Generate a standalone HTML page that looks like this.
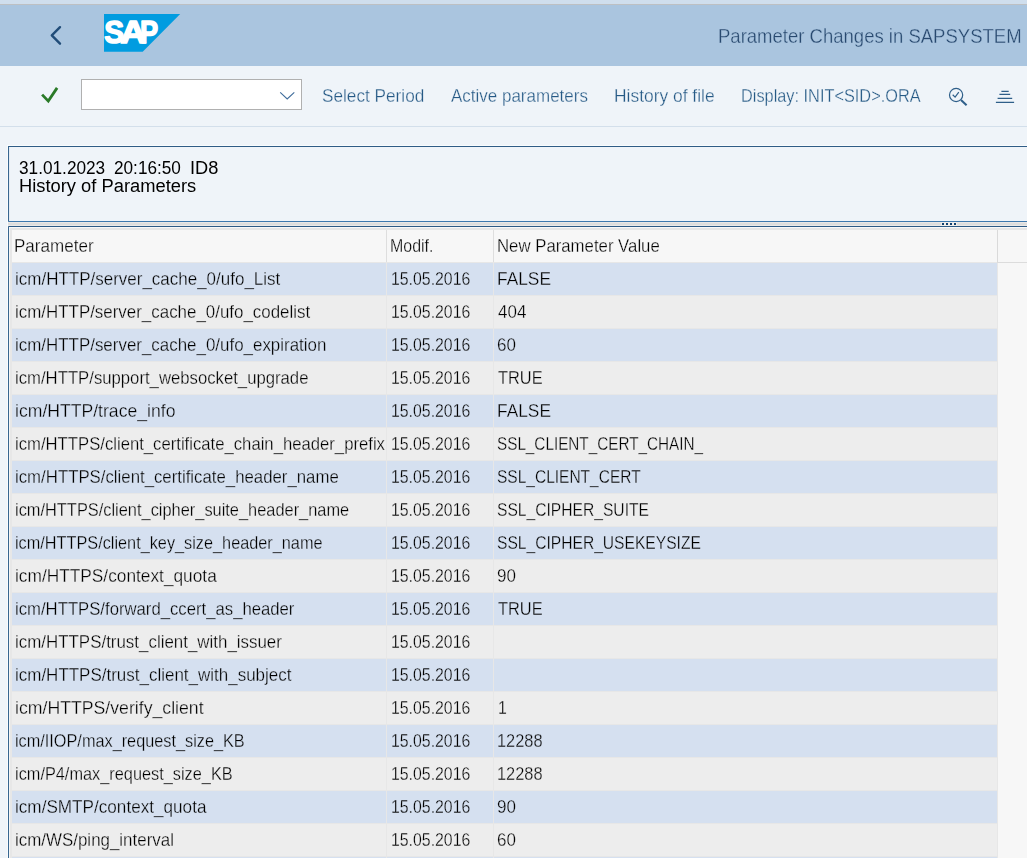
<!DOCTYPE html>
<html lang="en">
<head>
<meta charset="utf-8">
<title>Parameter Changes in SAPSYSTEM</title>
<style>
html,body{margin:0;padding:0}
body{width:1027px;height:858px;overflow:hidden;background:#eff4f9;font-family:"Liberation Sans", "Noto Sans CJK JP", sans-serif;}
#app{position:relative;width:1027px;height:858px;overflow:hidden;background:#eff4f9}
#app div,#app span,#app svg{position:absolute}
#txt{left:0;top:0;width:1027px;height:858px;will-change:transform}
.t{white-space:pre;line-height:1;transform-origin:0 0;}
#strip{left:0;top:0;width:1027px;height:4px;background:#cfdeed}
#stripline{left:0;top:4px;width:1027px;height:1px;background:#bdc0c3}
#hdr{left:0;top:5px;width:1027px;height:61px;background:#aac5df}
#tbline{left:0;top:126px;width:1027px;height:1px;background:#d3dfeb}
#cmd{left:81px;top:79px;width:219px;height:29px;background:#fff;border:1px solid #b0b0b0}
#box1{left:8px;top:146px;width:1030px;height:74px;border:1px solid #376690;border-top-color:#2f5c86;border-bottom-color:#3d78ae;border-radius:0 0 0 1px;box-shadow:inset 1px 0 0 #e4ebf3}
#gap{left:8px;top:222px;width:1019px;height:4px;background:linear-gradient(#e9e7e5 0 1px,#dddddd 1px 3px,#ebe9e7 3px 4px)}
#hl{left:7px;top:145px;width:1px;height:713px;background:#f8fbfe}
#hl2{left:7px;top:145px;width:1020px;height:1px;background:#f9fcfe}
#box2{left:8px;top:226px;width:1030px;height:700px;border:1px solid #2d5a85;border-left-color:#376690;border-radius:1px 0 0 0;background:#f7f7f7}
#lstrip{left:9px;top:227px;width:3px;height:640px;background:linear-gradient(90deg,#f4f4f4 0 1px,#e7e7e7 1px 3px)}
#tstrip{left:10px;top:227px;width:1017px;height:3px;background:linear-gradient(#f8f8f8 0 1px,#e6e6e6 1px 3px)}
#thead{left:12px;top:230px;width:985px;height:32px;background:#f7f7f7}
#vline{left:997px;top:230px;width:1px;height:32px;background:#dadada}
#vline2{left:997px;top:262px;width:1px;height:600px;background:#e7e7e7}
#hline{left:997px;top:262px;width:30px;height:1px;background:#dcdcdc}
.r{left:12px;width:985px;height:32px;border-top:1px solid #e7e7e7}
.rb{background:#d5e0f0}
.rg{background:#ededed}
.s{width:1px;height:32px;top:0;background:#e7e7e7}
.hs{width:1px;height:32px;top:230px;background:#dedede}
.dot{width:2px;height:2px;top:223px;background:#10406f}
#halo{left:941px;top:222px;width:16px;height:4px;background:#f0edea}

</style>
</head>
<body>
<div id="app">
<div id="strip"></div><div id="stripline"></div><div id="hdr"></div>
<svg style="left:44px;top:20px" width="24" height="32" viewBox="44 20 24 32"><path d="M60 27.2 L51.8 35.3 L60 43.7" fill="none" stroke="#214d79" stroke-width="2.4" stroke-linecap="round" stroke-linejoin="round"/></svg>
<svg style="left:100px;top:10px" width="90" height="46" viewBox="100 10 90 46" role="img" aria-label="SAP"><title>SAP</title><path d="M104 14 H180.2 L142.7 51.7 H104 Z" fill="#019ce0"/><text font-family="Liberation Sans, sans-serif" font-weight="bold" font-size="31" fill="#fff" stroke="#fff" stroke-width="1.5" stroke-linejoin="round" y="43.1"><tspan x="104.2" textLength="19.9" lengthAdjust="spacingAndGlyphs">S</tspan><tspan x="120.2" textLength="25.8" lengthAdjust="spacingAndGlyphs">A</tspan><tspan x="140.1" textLength="18.1" lengthAdjust="spacingAndGlyphs">P</tspan></text></svg>
<div id="tbline"></div>
<svg style="left:36px;top:82px" width="28" height="26" viewBox="36 82 28 26"><path d="M42.1 94.6 L48.3 101.1 L57.1 87.9" fill="none" stroke="#2a7a28" stroke-width="2.8" stroke-linecap="butt" stroke-linejoin="miter"/></svg>
<div id="cmd"></div>
<svg style="left:276px;top:88px" width="24" height="16" viewBox="276 88 24 16"><path d="M280.2 92.3 L287.2 98.9 L294.3 92.3" fill="none" stroke="#3f6c9b" stroke-width="1.1"/></svg>
<svg style="left:944px;top:84px" width="28" height="26" viewBox="944 84 28 26"><circle cx="956.1" cy="95" r="6.6" fill="none" stroke="#2f5f8a" stroke-width="1.2"/><path d="M961 100 L966.6 105.3" stroke="#2f5f8a" stroke-width="2" stroke-linecap="butt" fill="none"/><path d="M952.7 94.8 L955.1 97.1 L958.8 92.2" stroke="#2f5f8a" stroke-width="1.2" fill="none"/></svg>
<svg style="left:992px;top:88px" width="26" height="18" viewBox="992 88 26 18"><path d="M1001.4 91.4 H1008.7 M999.4 94.4 H1010.2 M997.6 98.4 H1012.2 M995.9 102.3 H1014.1" stroke="#2f5f8a" stroke-width="1.15" fill="none"/></svg>
<div id="box1"></div><div id="gap"></div><div id="hl"></div><div id="hl2"></div>
<div id="halo"></div>
<div class="dot" style="left:942px"></div>
<div class="dot" style="left:946px"></div>
<div class="dot" style="left:950px"></div>
<div class="dot" style="left:954px"></div>
<div id="box2"></div><div id="lstrip"></div><div id="tstrip"></div><div id="thead"></div>
<div class="hs" style="left:386px"></div><div class="hs" style="left:493px"></div>
<div id="vline"></div><div id="vline2"></div><div id="hline"></div>
<div class="r rb" style="top:262px"><div class="s" style="left:374px"></div><div class="s" style="left:481px"></div></div>
<div class="r rg" style="top:295px"><div class="s" style="left:374px"></div><div class="s" style="left:481px"></div></div>
<div class="r rb" style="top:328px"><div class="s" style="left:374px"></div><div class="s" style="left:481px"></div></div>
<div class="r rg" style="top:361px"><div class="s" style="left:374px"></div><div class="s" style="left:481px"></div></div>
<div class="r rb" style="top:394px"><div class="s" style="left:374px"></div><div class="s" style="left:481px"></div></div>
<div class="r rg" style="top:427px"><div class="s" style="left:374px"></div><div class="s" style="left:481px"></div></div>
<div class="r rb" style="top:460px"><div class="s" style="left:374px"></div><div class="s" style="left:481px"></div></div>
<div class="r rg" style="top:493px"><div class="s" style="left:374px"></div><div class="s" style="left:481px"></div></div>
<div class="r rb" style="top:526px"><div class="s" style="left:374px"></div><div class="s" style="left:481px"></div></div>
<div class="r rg" style="top:559px"><div class="s" style="left:374px"></div><div class="s" style="left:481px"></div></div>
<div class="r rb" style="top:592px"><div class="s" style="left:374px"></div><div class="s" style="left:481px"></div></div>
<div class="r rg" style="top:625px"><div class="s" style="left:374px"></div><div class="s" style="left:481px"></div></div>
<div class="r rb" style="top:658px"><div class="s" style="left:374px"></div><div class="s" style="left:481px"></div></div>
<div class="r rg" style="top:691px"><div class="s" style="left:374px"></div><div class="s" style="left:481px"></div></div>
<div class="r rb" style="top:724px"><div class="s" style="left:374px"></div><div class="s" style="left:481px"></div></div>
<div class="r rg" style="top:757px"><div class="s" style="left:374px"></div><div class="s" style="left:481px"></div></div>
<div class="r rb" style="top:790px"><div class="s" style="left:374px"></div><div class="s" style="left:481px"></div></div>
<div class="r rg" style="top:823px"><div class="s" style="left:374px"></div><div class="s" style="left:481px"></div></div>
<div class="r rb" style="top:856px"><div class="s" style="left:374px"></div><div class="s" style="left:481px"></div></div>
<div id="txt">
<span class="t" style="left:717.74px;top:25.32px;font-size:21px;color:#28496f;-webkit-text-stroke:0.35px #aac5df;transform:scaleX(0.8818)">Parameter Changes in SAPSYSTEM</span>
<span class="t" style="left:321.67px;top:87.44px;font-size:18.5px;color:#255985;-webkit-text-stroke:0.3px #eff4f9;transform:scaleX(0.9296)">Select Period</span>
<span class="t" style="left:451.20px;top:87.44px;font-size:18.5px;color:#255985;-webkit-text-stroke:0.3px #eff4f9;transform:scaleX(0.9182)">Active parameters</span>
<span class="t" style="left:614.46px;top:87.44px;font-size:18.5px;color:#255985;-webkit-text-stroke:0.3px #eff4f9;transform:scaleX(0.9410)">History of file</span>
<span class="t" style="left:741.32px;top:87.44px;font-size:18.5px;color:#255985;-webkit-text-stroke:0.3px #eff4f9;transform:scaleX(0.8822)">Display: INIT&lt;SID&gt;.ORA</span>
<span class="t" style="left:18.64px;top:158.96px;font-size:18px;color:#000;transform:scaleX(0.9568)">31.01.2023</span>
<span class="t" style="left:114.45px;top:158.96px;font-size:18px;color:#000;transform:scaleX(0.9544)">20:16:50</span>
<span class="t" style="left:190.48px;top:158.96px;font-size:18px;color:#000;transform:scaleX(1.0120)">ID8</span>
<span class="t" style="left:18.58px;top:176.96px;font-size:18px;color:#000;transform:scaleX(1.0180)">History of Parameters</span>
<span class="t" style="left:14.28px;top:237.34px;font-size:18.5px;color:#000;-webkit-text-stroke:0.3px #f7f7f7;transform:scaleX(0.9212)">Parameter</span>
<span class="t" style="left:389.94px;top:237.34px;font-size:18.5px;color:#000;-webkit-text-stroke:0.3px #f7f7f7;transform:scaleX(0.8625)">Modif.</span>
<span class="t" style="left:496.79px;top:237.34px;font-size:18.5px;color:#000;-webkit-text-stroke:0.3px #f7f7f7;transform:scaleX(0.9062)">New Parameter Value</span>
<span class="t" style="left:15.08px;top:270.34px;font-size:18.5px;color:#000;-webkit-text-stroke:0.3px #d5e0f0;transform:scaleX(0.9181)">icm/HTTP/server_cache_0/ufo_List</span>
<span class="t" style="left:390.54px;top:270.34px;font-size:18.5px;color:#000;-webkit-text-stroke:0.3px #d5e0f0;transform:scaleX(0.8560)">15.05.2016</span>
<span class="t" style="left:496.76px;top:270.34px;font-size:18.5px;color:#000;-webkit-text-stroke:0.3px #d5e0f0;transform:scaleX(0.9375)">FALSE</span>
<span class="t" style="left:15.09px;top:303.34px;font-size:18.5px;color:#000;-webkit-text-stroke:0.3px #ededed;transform:scaleX(0.9143)">icm/HTTP/server_cache_0/ufo_codelist</span>
<span class="t" style="left:390.54px;top:303.34px;font-size:18.5px;color:#000;-webkit-text-stroke:0.3px #ededed;transform:scaleX(0.8560)">15.05.2016</span>
<span class="t" style="left:497.70px;top:303.34px;font-size:18.5px;color:#000;-webkit-text-stroke:0.3px #ededed;transform:scaleX(0.9200)">404</span>
<span class="t" style="left:15.09px;top:336.34px;font-size:18.5px;color:#000;-webkit-text-stroke:0.3px #d5e0f0;transform:scaleX(0.9148)">icm/HTTP/server_cache_0/ufo_expiration</span>
<span class="t" style="left:390.54px;top:336.34px;font-size:18.5px;color:#000;-webkit-text-stroke:0.3px #d5e0f0;transform:scaleX(0.8560)">15.05.2016</span>
<span class="t" style="left:496.78px;top:336.34px;font-size:18.5px;color:#000;-webkit-text-stroke:0.3px #d5e0f0;transform:scaleX(0.9211)">60</span>
<span class="t" style="left:15.10px;top:369.34px;font-size:18.5px;color:#000;-webkit-text-stroke:0.3px #ededed;transform:scaleX(0.9031)">icm/HTTP/support_websocket_upgrade</span>
<span class="t" style="left:390.54px;top:369.34px;font-size:18.5px;color:#000;-webkit-text-stroke:0.3px #ededed;transform:scaleX(0.8560)">15.05.2016</span>
<span class="t" style="left:497.70px;top:369.34px;font-size:18.5px;color:#000;-webkit-text-stroke:0.3px #ededed;transform:scaleX(0.8860)">TRUE</span>
<span class="t" style="left:15.05px;top:402.34px;font-size:18.5px;color:#000;-webkit-text-stroke:0.3px #d5e0f0;transform:scaleX(0.9515)">icm/HTTP/trace_info</span>
<span class="t" style="left:390.54px;top:402.34px;font-size:18.5px;color:#000;-webkit-text-stroke:0.3px #d5e0f0;transform:scaleX(0.8560)">15.05.2016</span>
<span class="t" style="left:496.76px;top:402.34px;font-size:18.5px;color:#000;-webkit-text-stroke:0.3px #d5e0f0;transform:scaleX(0.9375)">FALSE</span>
<span class="t" style="left:15.10px;top:435.34px;font-size:18.5px;color:#000;-webkit-text-stroke:0.3px #ededed;transform:scaleX(0.9017)">icm/HTTPS/client_certificate_chain_header_prefix</span>
<span class="t" style="left:390.54px;top:435.34px;font-size:18.5px;color:#000;-webkit-text-stroke:0.3px #ededed;transform:scaleX(0.8560)">15.05.2016</span>
<span class="t" style="left:496.87px;top:435.34px;font-size:18.5px;color:#000;-webkit-text-stroke:0.3px #ededed;transform:scaleX(0.8257)">SSL_CLIENT_CERT_CHAIN_</span>
<span class="t" style="left:15.09px;top:468.34px;font-size:18.5px;color:#000;-webkit-text-stroke:0.3px #d5e0f0;transform:scaleX(0.9073)">icm/HTTPS/client_certificate_header_name</span>
<span class="t" style="left:390.54px;top:468.34px;font-size:18.5px;color:#000;-webkit-text-stroke:0.3px #d5e0f0;transform:scaleX(0.8560)">15.05.2016</span>
<span class="t" style="left:496.86px;top:468.34px;font-size:18.5px;color:#000;-webkit-text-stroke:0.3px #d5e0f0;transform:scaleX(0.8382)">SSL_CLIENT_CERT</span>
<span class="t" style="left:15.11px;top:501.34px;font-size:18.5px;color:#000;-webkit-text-stroke:0.3px #ededed;transform:scaleX(0.8856)">icm/HTTPS/client_cipher_suite_header_name</span>
<span class="t" style="left:390.54px;top:501.34px;font-size:18.5px;color:#000;-webkit-text-stroke:0.3px #ededed;transform:scaleX(0.8560)">15.05.2016</span>
<span class="t" style="left:496.86px;top:501.34px;font-size:18.5px;color:#000;-webkit-text-stroke:0.3px #ededed;transform:scaleX(0.8444)">SSL_CIPHER_SUITE</span>
<span class="t" style="left:15.12px;top:534.34px;font-size:18.5px;color:#000;-webkit-text-stroke:0.3px #d5e0f0;transform:scaleX(0.8796)">icm/HTTPS/client_key_size_header_name</span>
<span class="t" style="left:390.54px;top:534.34px;font-size:18.5px;color:#000;-webkit-text-stroke:0.3px #d5e0f0;transform:scaleX(0.8560)">15.05.2016</span>
<span class="t" style="left:496.86px;top:534.34px;font-size:18.5px;color:#000;-webkit-text-stroke:0.3px #d5e0f0;transform:scaleX(0.8438)">SSL_CIPHER_USEKEYSIZE</span>
<span class="t" style="left:15.07px;top:567.34px;font-size:18.5px;color:#000;-webkit-text-stroke:0.3px #ededed;transform:scaleX(0.9344)">icm/HTTPS/context_quota</span>
<span class="t" style="left:390.54px;top:567.34px;font-size:18.5px;color:#000;-webkit-text-stroke:0.3px #ededed;transform:scaleX(0.8560)">15.05.2016</span>
<span class="t" style="left:496.78px;top:567.34px;font-size:18.5px;color:#000;-webkit-text-stroke:0.3px #ededed;transform:scaleX(0.9211)">90</span>
<span class="t" style="left:15.10px;top:600.34px;font-size:18.5px;color:#000;-webkit-text-stroke:0.3px #d5e0f0;transform:scaleX(0.9029)">icm/HTTPS/forward_ccert_as_header</span>
<span class="t" style="left:390.54px;top:600.34px;font-size:18.5px;color:#000;-webkit-text-stroke:0.3px #d5e0f0;transform:scaleX(0.8560)">15.05.2016</span>
<span class="t" style="left:497.70px;top:600.34px;font-size:18.5px;color:#000;-webkit-text-stroke:0.3px #d5e0f0;transform:scaleX(0.8860)">TRUE</span>
<span class="t" style="left:15.09px;top:633.34px;font-size:18.5px;color:#000;-webkit-text-stroke:0.3px #ededed;transform:scaleX(0.9141)">icm/HTTPS/trust_client_with_issuer</span>
<span class="t" style="left:390.54px;top:633.34px;font-size:18.5px;color:#000;-webkit-text-stroke:0.3px #ededed;transform:scaleX(0.8560)">15.05.2016</span>
<span class="t" style="left:15.08px;top:666.34px;font-size:18.5px;color:#000;-webkit-text-stroke:0.3px #d5e0f0;transform:scaleX(0.9177)">icm/HTTPS/trust_client_with_subject</span>
<span class="t" style="left:390.54px;top:666.34px;font-size:18.5px;color:#000;-webkit-text-stroke:0.3px #d5e0f0;transform:scaleX(0.8560)">15.05.2016</span>
<span class="t" style="left:15.04px;top:699.34px;font-size:18.5px;color:#000;-webkit-text-stroke:0.3px #ededed;transform:scaleX(0.9556)">icm/HTTPS/verify_client</span>
<span class="t" style="left:390.54px;top:699.34px;font-size:18.5px;color:#000;-webkit-text-stroke:0.3px #ededed;transform:scaleX(0.8560)">15.05.2016</span>
<span class="t" style="left:497.74px;top:699.34px;font-size:18.5px;color:#000;-webkit-text-stroke:0.3px #ededed;transform:scaleX(0.8600)">1</span>
<span class="t" style="left:15.12px;top:732.34px;font-size:18.5px;color:#000;-webkit-text-stroke:0.3px #d5e0f0;transform:scaleX(0.8795)">icm/IIOP/max_request_size_KB</span>
<span class="t" style="left:390.54px;top:732.34px;font-size:18.5px;color:#000;-webkit-text-stroke:0.3px #d5e0f0;transform:scaleX(0.8560)">15.05.2016</span>
<span class="t" style="left:496.81px;top:732.34px;font-size:18.5px;color:#000;-webkit-text-stroke:0.3px #d5e0f0;transform:scaleX(0.8860)">12288</span>
<span class="t" style="left:15.12px;top:765.34px;font-size:18.5px;color:#000;-webkit-text-stroke:0.3px #ededed;transform:scaleX(0.8820)">icm/P4/max_request_size_KB</span>
<span class="t" style="left:390.54px;top:765.34px;font-size:18.5px;color:#000;-webkit-text-stroke:0.3px #ededed;transform:scaleX(0.8560)">15.05.2016</span>
<span class="t" style="left:496.81px;top:765.34px;font-size:18.5px;color:#000;-webkit-text-stroke:0.3px #ededed;transform:scaleX(0.8860)">12288</span>
<span class="t" style="left:15.07px;top:798.34px;font-size:18.5px;color:#000;-webkit-text-stroke:0.3px #d5e0f0;transform:scaleX(0.9262)">icm/SMTP/context_quota</span>
<span class="t" style="left:390.54px;top:798.34px;font-size:18.5px;color:#000;-webkit-text-stroke:0.3px #d5e0f0;transform:scaleX(0.8560)">15.05.2016</span>
<span class="t" style="left:496.78px;top:798.34px;font-size:18.5px;color:#000;-webkit-text-stroke:0.3px #d5e0f0;transform:scaleX(0.9211)">90</span>
<span class="t" style="left:15.09px;top:831.34px;font-size:18.5px;color:#000;-webkit-text-stroke:0.3px #ededed;transform:scaleX(0.9145)">icm/WS/ping_interval</span>
<span class="t" style="left:390.54px;top:831.34px;font-size:18.5px;color:#000;-webkit-text-stroke:0.3px #ededed;transform:scaleX(0.8560)">15.05.2016</span>
<span class="t" style="left:496.78px;top:831.34px;font-size:18.5px;color:#000;-webkit-text-stroke:0.3px #ededed;transform:scaleX(0.9211)">60</span>
</div>
</div>
</body>
</html>
